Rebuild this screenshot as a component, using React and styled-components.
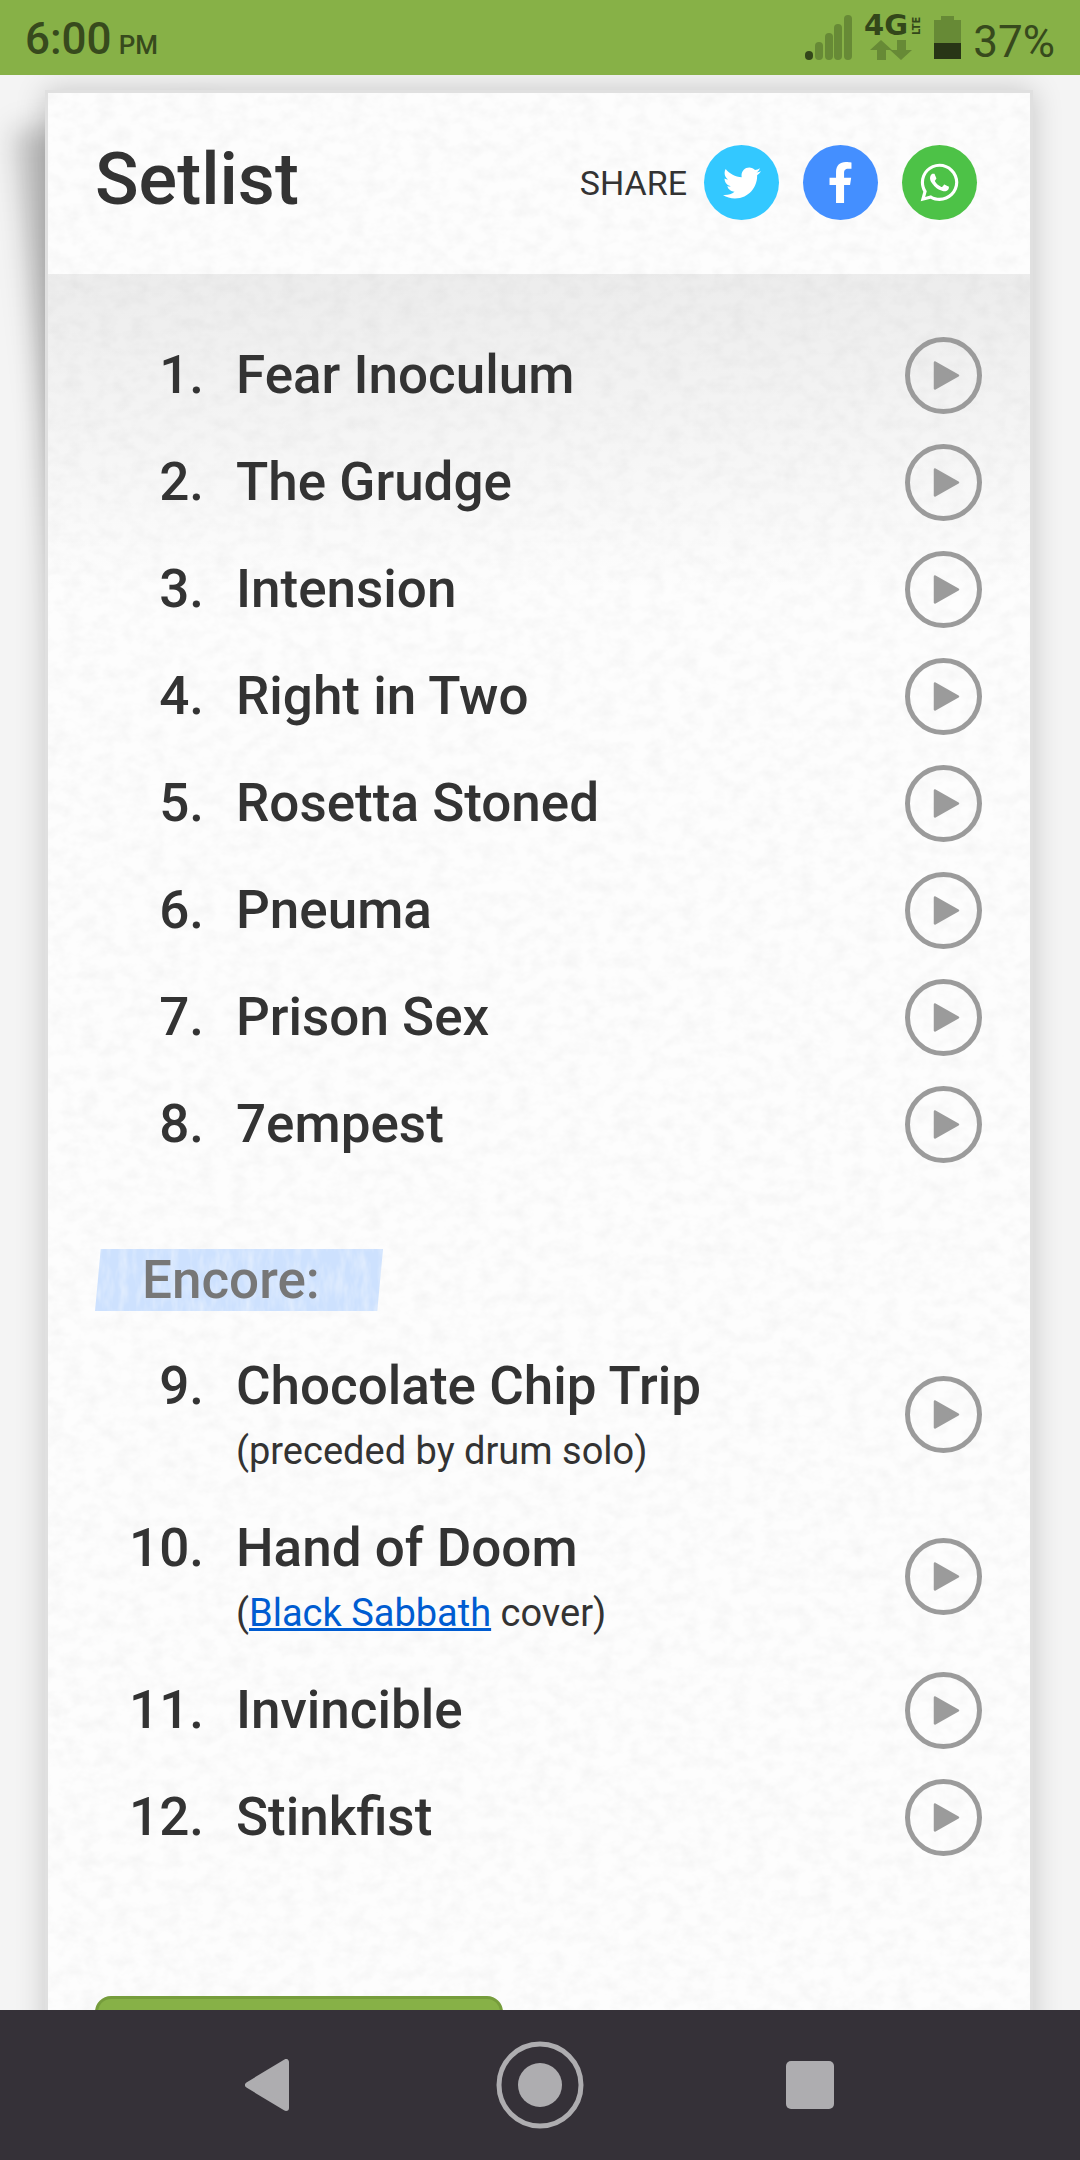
import React from "react";
import styled, { createGlobalStyle } from "styled-components";
import { FaFacebookF, FaTwitter, FaWhatsapp } from "react-icons/fa";

const GlobalStyle = createGlobalStyle`
    * {
        box-sizing: border-box;
    }

    body {
        margin: 0;
        background-color: #f4f4f4;
        color: #333;
        font-family: Roboto, sans-serif;
    }
`;

const Screen = styled.div`
    display: flex;
    flex-direction: column;
    height: 100vh;
`;

// Status bar
const StatusBar = styled.header`
    display: flex;
    align-items: center;
    justify-content: space-between;
    flex: none;
    height: 75px;
    padding: 8px 25px 0;
    background-color: #87b147;
    color: #374a1d;
    font-size: 44px;
    font-weight: 500;
    line-height: 52px;
`;

const Clock = styled.div`
    display: flex;
    align-items: baseline;
    gap: 7px;
`;

const Meridiem = styled.span`
    font-size: 26px;
`;

const StatusIcons = styled.div`
    display: flex;
    align-items: center;
    gap: 12px;
    font-weight: 400;

    svg {
        display: block;
        margin-bottom: 8px;
    }
`;

// Page
const Page = styled.main`
    flex: 1;
    min-height: 0;
    overflow: hidden;
    padding: 15px 47px 0 45px;
`;

// The blurred strip behind the paper makes its top left corner look lifted
const Sheet = styled.article`
    position: relative;
    z-index: 0;
    min-height: 100%;

    &::before {
        content: "";
        position: absolute;
        z-index: -1;
        top: 40px;
        left: -31px;
        width: 20%;
        height: 640px;
        background-color: rgba(0, 0, 0, 0.22);
        filter: blur(14px);
        transform: rotate(-6deg);
        transform-origin: top left;
    }
`;

const Paper = styled.div`
    position: relative;
    z-index: 0;
    min-height: 1960px;
    border: 3px solid #e0e0e0;
    background-color: #fdfdfd;
    box-shadow: 0 0 28px rgba(0, 0, 0, 0.19);
`;

const Grain = styled.svg`
    position: absolute;
    z-index: -1;
    inset: 0;
    width: 100%;
    height: 100%;
    pointer-events: none;
`;

const SheetHeader = styled.div`
    display: flex;
    align-items: center;
    justify-content: space-between;
    height: 181px;
    padding: 0 53px 0 47px;
`;

const Title = styled.h1`
    margin: 0 0 8px;
    font-size: 72px;
    font-weight: 500;
    line-height: 84px;
`;

const Share = styled.div`
    display: flex;
    align-items: center;
    gap: 24px;
    margin-bottom: 2px;
    font-size: 34px;
`;

const ShareLabel = styled.span`
    margin-right: -7px;
`;

const ShareLink = styled.a`
    display: flex;
    align-items: center;
    justify-content: center;
    width: 75px;
    height: 75px;
    border-radius: 50%;
    background-color: ${(props) => props.$color};
    color: #fff;
`;

const SheetBody = styled.div`
    padding: 48px 48px 0 47px;
    background: linear-gradient(rgba(0, 0, 0, 0.065), transparent 320px);
`;

// Songs
const Songs = styled.ol`
    margin: 0;
    padding: 0;
    list-style: none;
`;

const Song = styled.li`
    display: grid;
    grid-template-columns: 109px 1fr 77px;
    column-gap: 32px;
    align-items: center;
    padding: 22px 0;
    font-size: 53px;
    font-weight: 500;
    line-height: 63px;
`;

const SongNumber = styled.span`
    align-self: start;
    text-align: right;
`;

const Note = styled.p`
    margin: 12px 0 0;
    font-size: 38px;
    font-weight: 400;
    line-height: 43px;
`;

const ArtistLink = styled.a`
    color: #005cd1;
    text-decoration: underline;
`;

const PlayButton = styled.button`
    width: 77px;
    height: 77px;
    margin: -20px 0;
    padding: 0;
    border: none;
    background: none;
    color: #9b9b9b;

    svg {
        display: block;
    }
`;

const Encore = styled.h2`
    position: relative;
    z-index: 0;
    width: 288px;
    margin: 71px 0 22px;
    padding-left: 47px;
    background-color: #cde1fe;
    clip-path: polygon(2% 0, 100% 0, 98% 100%, 0 100%);
    color: #777;
    font-size: 53px;
    font-weight: 500;
    line-height: 62px;
`;

const EditButton = styled.button`
    display: block;
    width: 408px;
    height: 110px;
    margin-top: 125px;
    border: 3px solid #769d3c;
    border-radius: 16px;
    background-color: #87b147;
`;

// Navigation bar
const NavBar = styled.nav`
    display: flex;
    align-items: center;
    justify-content: center;
    gap: 182px;
    flex: none;
    height: 150px;
    background-color: #353138;
`;

const NavButton = styled.button`
    display: flex;
    align-items: center;
    justify-content: center;
    width: 88px;
    height: 88px;
    padding: 0;
    border: none;
    background: none;
    color: #aeadb0;
`;

const songs = [
    { title: "Fear Inoculum" },
    { title: "The Grudge" },
    { title: "Intension" },
    { title: "Right in Two" },
    { title: "Rosetta Stoned" },
    { title: "Pneuma" },
    { title: "Prison Sex" },
    { title: "7empest" },
];

const encoreSongs = [
    { title: "Chocolate Chip Trip", note: "(preceded by drum solo)" },
    {
        title: "Hand of Doom",
        note: <>(<ArtistLink href="#black-sabbath">Black Sabbath</ArtistLink> cover)</>,
    },
    { title: "Invincible" },
    { title: "Stinkfist" },
];

const shares = [
    { name: "Twitter", color: "#33c8ff", Icon: FaTwitter, size: 38 },
    { name: "Facebook", color: "#448fff", Icon: FaFacebookF, size: 41 },
    { name: "WhatsApp", color: "#4dc247", Icon: FaWhatsapp, size: 43 },
];

// Speckles for the paper and the tape; shade is the gray or white of the specks
const Texture = ({ id, frequency, shade, strength }) => (
    <Grain aria-hidden="true">
        <filter id={id} x="0" y="0" width="100%" height="100%">
            <feTurbulence type="fractalNoise" baseFrequency={frequency} numOctaves="3" seed="4" />
            <feColorMatrix
                values={`0 0 0 0 ${shade}  0 0 0 0 ${shade}  0 0 0 0 ${shade}  ${strength} 0 0 0 ${strength * -0.38}`}
            />
        </filter>
        <rect width="100%" height="100%" filter={`url(#${id})`} />
    </Grain>
);

const SignalIcon = () => (
    <svg width="47" height="45" viewBox="0 0 47 45" fill="#678a36">
        <rect x="0" y="36" width="8" height="9" rx="4" fill="#33471a" />
        <rect x="10" y="27" width="8" height="18" rx="4" />
        <rect x="20" y="18" width="8" height="27" rx="4" />
        <rect x="29" y="9" width="8" height="36" rx="4" />
        <rect x="39" y="0" width="8" height="45" rx="4" />
    </svg>
);

const NetworkIcon = () => (
    <svg width="58" height="65" viewBox="0 -10 58 65" fill="#33471a">
        <text x="0" y="20" fontFamily="DejaVu Sans" fontWeight="700" fontSize="29">4G</text>
        <text transform="translate(56 20) rotate(-90)" fontFamily="DejaVu Sans" fontWeight="700" fontSize="10">LTE</text>
        <path fill="#678a36" d="M17 25l11 10h-6v10h-9V35H6zM33 25h9v10h6L37 45 26 35h7z" />
    </svg>
);

const BatteryIcon = () => (
    <svg width="27" height="43" viewBox="0 0 27 43">
        <path fill="#678a36" d="M7 0h13v4h7v39H0V4h7z" />
        <path fill="#283516" d="M0 27h27v16H0z" />
    </svg>
);

const PlayIcon = () => (
    <svg width="77" height="77" viewBox="0 0 77 77">
        <circle cx="38.5" cy="38.5" r="36" fill="none" stroke="currentColor" strokeWidth="5" />
        <path d="M30 25.500L53 38.500L30 51.500z" fill="currentColor" stroke="currentColor" strokeWidth="2.500" strokeLinejoin="round" />
    </svg>
);

const SongList = ({ items, start }) => (
    <Songs start={start}>
        {items.map((item, i) => (
            <Song key={item.title}>
                <SongNumber>{start + i}.</SongNumber>
                <div>
                    {item.title}
                    {item.note && <Note>{item.note}</Note>}
                </div>
                <PlayButton type="button" aria-label={`Play ${item.title}`}>
                    <PlayIcon />
                </PlayButton>
            </Song>
        ))}
    </Songs>
);

const App = () => {
    return (
        <Screen>
            <GlobalStyle />
            <StatusBar>
                <Clock>
                    6:00<Meridiem>PM</Meridiem>
                </Clock>
                <StatusIcons>
                    <SignalIcon />
                    <NetworkIcon />
                    <BatteryIcon />
                    37%
                </StatusIcons>
            </StatusBar>

            <Page>
                <Sheet>
                    <Paper>
                        <Texture id="paper" frequency="0.06 0.08" shade={0.5} strength={0.22} />
                        <SheetHeader>
                            <Title>Setlist</Title>
                            <Share>
                                <ShareLabel>SHARE</ShareLabel>
                                {shares.map(({ name, color, Icon, size }) => (
                                    <ShareLink key={name} href={`#${name.toLowerCase()}`} aria-label={name} $color={color}>
                                        <Icon size={size} />
                                    </ShareLink>
                                ))}
                            </Share>
                        </SheetHeader>
                        <SheetBody>
                            <SongList items={songs} start={1} />
                            <Encore>
                                <Texture id="tape" frequency="0.12 0.04" shade={1} strength={0.8} />
                                Encore:
                            </Encore>
                            <SongList items={encoreSongs} start={9} />
                            <EditButton type="button" aria-label="Edit setlist" />
                        </SheetBody>
                    </Paper>
                </Sheet>
            </Page>

            <NavBar>
                <NavButton type="button" aria-label="Back">
                    <svg width="50" height="52" viewBox="0 0 50 52">
                        <path d="M41 3v46L3 26z" fill="currentColor" stroke="currentColor" strokeWidth="6" strokeLinejoin="round" />
                    </svg>
                </NavButton>
                <NavButton type="button" aria-label="Home">
                    <svg width="88" height="88" viewBox="0 0 88 88">
                        <circle cx="44" cy="44" r="41" fill="none" stroke="currentColor" strokeWidth="5" />
                        <circle cx="44" cy="44" r="22" fill="currentColor" />
                    </svg>
                </NavButton>
                <NavButton type="button" aria-label="Recent apps">
                    <svg width="48" height="48" viewBox="0 0 48 48">
                        <rect width="48" height="48" rx="5" fill="currentColor" />
                    </svg>
                </NavButton>
            </NavBar>
        </Screen>
    );
};

export default App;
